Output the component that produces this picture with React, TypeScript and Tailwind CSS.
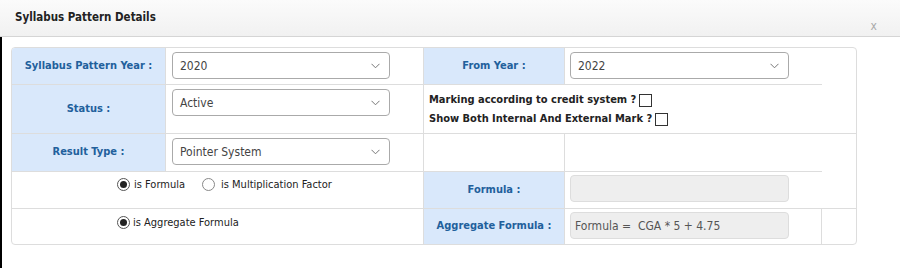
import React from "react";

const font = "font-['DejaVu_Sans_Condensed','Liberation_Sans',sans-serif]";

function Chevron() {
  return (
    <svg width="9" height="6" viewBox="0 0 9 6" className="shrink-0">
      <path d="M0.5 0.8 L4.5 4.8 L8.5 0.8" fill="none" stroke="#777" strokeWidth="1" />
    </svg>
  );
}

function Select({ value, width }: { value: string; width: string }) {
  return (
    <div
      className={`${width} h-[27px] border border-[#aaa] rounded-[4px] bg-white pl-[7px] pr-[9px] flex items-center justify-between text-[12px] text-[#444]`}
    >
      <span>{value}</span>
      <Chevron />
    </div>
  );
}

function Label({ text }: { text: string }) {
  return <span className="text-[11px] font-bold text-[#22609c]">{text}</span>;
}

function Radio({ checked }: { checked?: boolean }) {
  return (
    <span
      className={`w-[13px] h-[13px] rounded-full border ${
        checked ? "border-[#555]" : "border-[#888]"
      } bg-white flex items-center justify-center shrink-0`}
    >
      {checked && <span className="w-[7px] h-[7px] rounded-full bg-[#222]" />}
    </span>
  );
}

function Checkbox() {
  return <span className="inline-block w-[13px] h-[13px] border border-[#333] bg-white align-middle ml-[3px]" />;
}

export default function App() {
  return (
    <div className={`w-[900px] h-[268px] bg-white ${font} overflow-hidden`}>
      {/* header */}
      <div className="h-[37px] border-b border-[#d5d5d5] bg-gradient-to-b from-[#fbfbfb] to-[#f1f1f1] flex items-center justify-between pl-[15px] pr-[23px]">
        <span className="text-[11.5px] font-bold text-[#222]">Syllabus Pattern Details</span>
        <span className="text-[12px] text-[#aaa] mt-[16px]">x</span>
      </div>

      {/* body */}
      <div className="h-[231px] border-l-2 border-black pt-[10px] pl-[9px]">
        <div className="w-[846px] border border-[#ddd] rounded-[4px] overflow-hidden">
          {/* row 1 */}
          <div className="flex h-[37px]">
            <div className="w-[154px] bg-[#d9e8fb] border-r border-b border-[#ddd] flex items-center justify-center">
              <Label text="Syllabus Pattern Year :" />
            </div>
            <div className="w-[258px] border-r border-b border-[#ddd] pl-[6px] pt-[4px]">
              <Select value="2020" width="w-[218px]" />
            </div>
            <div className="w-[141px] bg-[#d9e8fb] border-r border-b border-[#ddd] flex items-center justify-center">
              <Label text="From Year :" />
            </div>
            <div className="w-[257px] border-b border-[#ddd] pl-[5px] pt-[4px]">
              <Select value="2022" width="w-[219px]" />
            </div>
            <div className="flex-1" />
          </div>

          {/* row 2 */}
          <div className="flex h-[49px] border-b border-[#ddd]">
            <div className="w-[154px] bg-[#d9e8fb] border-r border-[#ddd] flex items-center justify-center">
              <Label text="Status :" />
            </div>
            <div className="w-[258px] border-r border-[#ddd] pl-[6px] pt-[4px]">
              <Select value="Active" width="w-[218px]" />
            </div>
            <div className="flex-1 pl-[5px] pt-[5px] text-[11px] font-bold text-[#222] leading-[19px]">
              <div>
                Marking according to credit system ?<Checkbox />
              </div>
              <div>
                Show Both Internal And External Mark ?<Checkbox />
              </div>
            </div>
          </div>

          {/* row 3 */}
          <div className="flex h-[38px]">
            <div className="w-[154px] bg-[#d9e8fb] border-r border-b border-[#ddd] flex items-center justify-center">
              <Label text="Result Type :" />
            </div>
            <div className="w-[258px] border-r border-b border-[#ddd] pl-[6px] pt-[4px]">
              <Select value="Pointer System" width="w-[218px]" />
            </div>
            <div className="w-[141px] border-r border-b border-[#ddd]" />
            <div className="w-[257px] border-b border-[#ddd]" />
            <div className="flex-1" />
          </div>

          {/* row 4 */}
          <div className="flex h-[37px] border-b border-[#ddd]">
            <div className="w-[412px] border-r border-[#ddd] pl-[105px] pt-[6px] flex items-start gap-[4px] text-[11px] text-[#222]">
              <Radio checked />
              <span className="leading-[13px] mr-[13px]">is Formula</span>
              <Radio />
              <span className="leading-[13px] ml-[2px]">is Multiplication Factor</span>
            </div>
            <div className="w-[141px] bg-[#d9e8fb] border-r border-[#ddd] flex items-center justify-center">
              <Label text="Formula :" />
            </div>
            <div className="flex-1 pl-[5px] pt-[3px]">
              <div className="w-[219px] h-[27px] rounded-[4px] border border-[#ddd] bg-[#eee]" />
            </div>
          </div>

          {/* row 5 */}
          <div className="flex h-[35px]">
            <div className="w-[412px] border-r border-[#ddd] pl-[105px] pt-[7px] flex items-start gap-[3px] text-[11px] text-[#222]">
              <Radio checked />
              <span className="leading-[13px]">is Aggregate Formula</span>
            </div>
            <div className="w-[141px] bg-[#d9e8fb] border-r border-[#ddd] flex items-center justify-center">
              <Label text="Aggregate Formula :" />
            </div>
            <div className="w-[257px] border-r border-[#ddd] pl-[5px] pt-[3px]">
              <div className="w-[219px] h-[27px] rounded-[4px] border border-[#ddd] bg-[#eee] flex items-center pl-[4px] text-[12px] text-[#555] whitespace-pre">
                Formula =  CGA * 5 + 4.75
              </div>
            </div>
            <div className="flex-1" />
          </div>
        </div>
      </div>
    </div>
  );
}
